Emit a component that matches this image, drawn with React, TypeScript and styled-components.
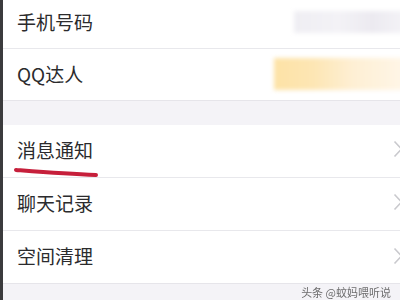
import React from 'react'
import styled, { createGlobalStyle } from 'styled-components'

const Global = createGlobalStyle`
    html, body {
        margin: 0;
        padding: 0;
        background: #f4f3f7;
        overflow: hidden;
    }
    body {
        font-family: "Noto Sans CJK SC", "Noto Sans", sans-serif;
    }
`

const Screen = styled.div`
    display: flex;
    width: 400px;
    height: 300px;
    overflow: hidden;
    background: #f4f3f7;
`

const Edge = styled.div`
    width: 3px;
    flex-shrink: 0;
    background: #3b3b3d;
`

const Content = styled.div`
    flex: 1;
    display: flex;
    flex-direction: column;
    min-width: 0;
`

const Group = styled.div<{ $gap?: number }>`
    background: #ffffff;
    margin-top: ${(p) => p.$gap ?? 0}px;
    border-bottom: 1px solid #e6e5ea;
    display: flex;
    flex-direction: column;
`

const Row = styled.div<{ $h: number; $last?: boolean; $lift?: number }>`
    position: relative;
    height: ${(p) => p.$h}px;
    box-sizing: border-box;
    display: flex;
    align-items: center;
    padding-left: 14px;
    padding-bottom: ${(p) => p.$lift ?? 2}px;
    border-bottom: ${(p) => (p.$last ? 'none' : '1px solid #e8e8ec')};
    overflow: hidden;
`

const Label = styled.span`
    font-size: 19px;
    color: #2b2b2d;
    line-height: 1;
`

const Blur = styled.div<{ $w: number; $h: number; $bg: string }>`
    margin-left: auto;
    width: ${(p) => p.$w}px;
    height: ${(p) => p.$h}px;
    background: ${(p) => p.$bg};
    filter: blur(2px);
    margin-right: -6px;
`

const Chevron = styled.svg`
    margin-left: auto;
    margin-right: -3px;
    flex-shrink: 0;
`

const Mark = styled.svg`
    position: absolute;
    left: 9px;
    top: 41px;
`

const Footer = styled.div`
    flex: 1;
    display: flex;
    justify-content: flex-end;
    align-items: center;
    padding-right: 9px;
`

const Watermark = styled.span`
    font-size: 11px;
    color: #4a4a4a;
    opacity: 0.8;
`

const Arrow = () => (
    <Chevron width="10" height="18" viewBox="0 0 10 18">
        <path d="M1.5 1.5 L8.5 9 L1.5 16.5" fill="none" stroke="#c9c9cd" strokeWidth="1.6" />
    </Chevron>
)

const App = () => {
    return (
        <>
            <Global />
            <Screen>
                <Edge />
                <Content>
                    <Group>
                        <Row $h={49} $lift={5}>
                            <Label>手机号码</Label>
                            <Blur
                                $w={112}
                                $h={22}
                                $bg="linear-gradient(90deg, #efeef3 0%, #f3f2f6 40%, #eceaf0 70%, #f4f3f7 100%)"
                            />
                        </Row>
                        <Row $h={51} $last>
                            <Label>QQ达人</Label>
                            <Blur
                                $w={132}
                                $h={32}
                                $bg="linear-gradient(90deg, #fde2a6 0%, #fde6b4 30%, #feefd4 60%, #fff6e8 100%)"
                            />
                        </Row>
                    </Group>
                    <Group $gap={24}>
                        <Row $h={53} $lift={4}>
                            <Label>消息通知</Label>
                            <Arrow />
                            <Mark width="90" height="14" viewBox="0 0 90 14">
                                <path
                                    d="M4 4 C 30 6, 55 8, 84 9"
                                    fill="none"
                                    stroke="#c61f3b"
                                    strokeWidth="4"
                                    strokeLinecap="round"
                                />
                            </Mark>
                        </Row>
                        <Row $h={53} $lift={4}>
                            <Label>聊天记录</Label>
                            <Arrow />
                        </Row>
                        <Row $h={52} $last $lift={3}>
                            <Label>空间清理</Label>
                            <Arrow />
                        </Row>
                    </Group>
                    <Footer>
                        <Watermark>头条 @蚊妈喂听说</Watermark>
                    </Footer>
                </Content>
            </Screen>
        </>
    )
}

export default App
